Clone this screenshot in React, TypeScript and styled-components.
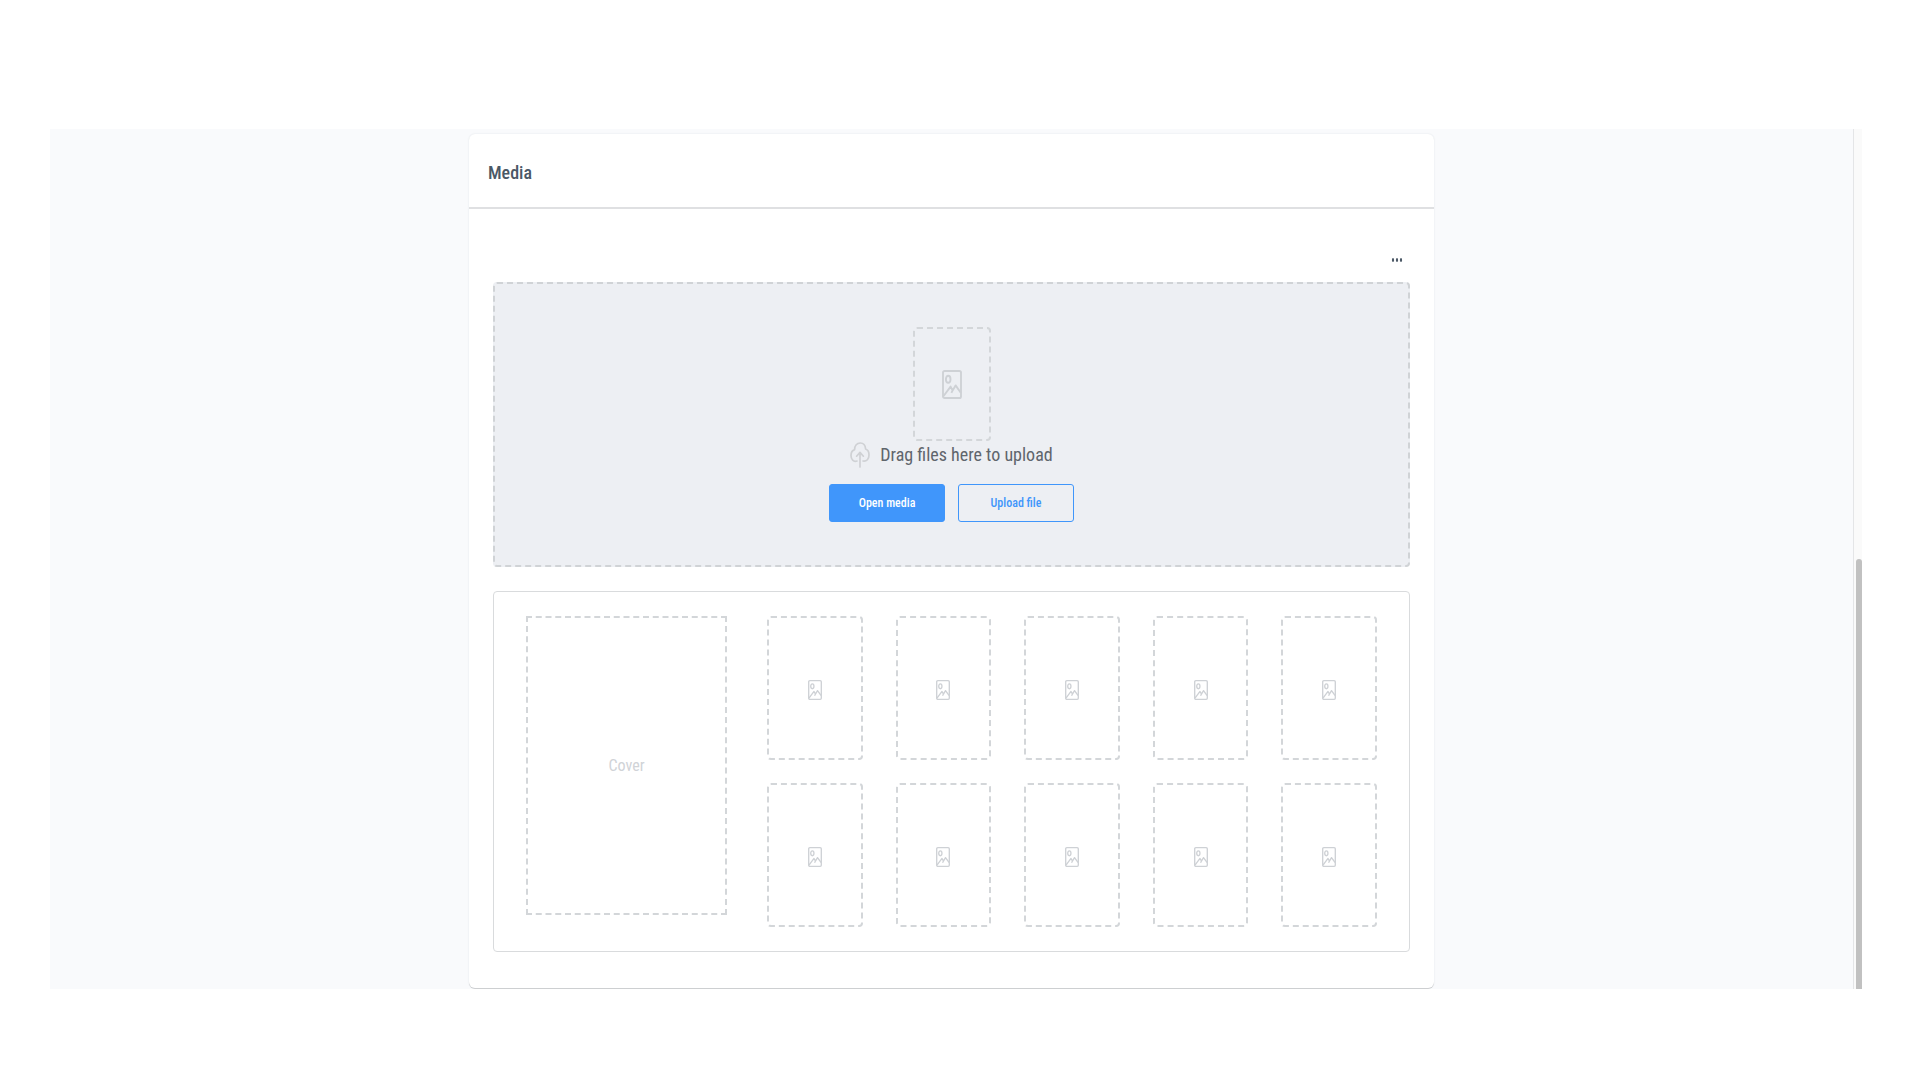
import React from "react";
import styled, { createGlobalStyle } from "styled-components";

const GlobalStyle = createGlobalStyle`
  *, *::before, *::after {
    box-sizing: border-box;
  }
  body {
    margin: 0;
    background: #ffffff;
    color: #4b5866;
    font-family: "Roboto Condensed", Roboto, "Liberation Sans", sans-serif;
  }
`;

const Page = styled.div`
  padding: 129px 58px 91px 50px;
`;

const Viewport = styled.div`
  display: flex;
  overflow: hidden;
  background: #f9fafc;
`;

const Content = styled.main`
  flex: 1;
  display: flex;
  justify-content: center;
  padding: 5px 20px 1px;
`;

const ScrollTrack = styled.div`
  display: flex;
  flex-direction: column;
  justify-content: flex-end;
  width: 9px;
  padding-left: 2px;
  border-left: 1px solid #e4e5e7;
  background: #fafafa;
`;

const ScrollThumb = styled.div`
  height: 50%;
  border-radius: 3px 3px 0 0;
  background: #c1c1c1;
`;

const Card = styled.section`
  width: 100%;
  max-width: 965px;
  border-radius: 6px;
  background: #ffffff;
  box-shadow: 0 1px 0 #cdcfd1, 0 0 2px #dfe2e6;
`;

const CardHeader = styled.header`
  display: flex;
  align-items: center;
  height: 75px;
  padding: 4px 18px 0 19px;
  border-bottom: 2px solid #dfe0e2;
`;

const Title = styled.h2`
  margin: 0;
  font-size: 18px;
  line-height: 28px;
  font-weight: 500;
`;

const CardBody = styled.div`
  display: flex;
  flex-direction: column;
  padding: 41px 24px 36px;
`;

const MenuButton = styled.button`
  align-self: flex-end;
  display: flex;
  align-items: center;
  justify-content: center;
  width: 26px;
  height: 20px;
  margin-bottom: 12px;
  padding: 0;
  border: 0;
  background: none;
  color: #4b5866;
  cursor: pointer;
`;

const DropZone = styled.div`
  display: flex;
  flex-direction: column;
  align-items: center;
  margin-bottom: 24px;
  padding: 43px 24px;
  border: 2px dashed #d0d3d6;
  border-radius: 4px;
  background: #edeff3;
`;

const Placeholder = styled.div<{ $width?: string; $height: number; $square?: boolean }>`
  display: flex;
  align-items: center;
  justify-content: center;
  width: ${(p) => p.$width ?? "auto"};
  height: ${(p) => p.$height}px;
  border: 2px dashed #d3d6d9;
  border-radius: ${(p) => (p.$square ? 0 : 4)}px;
  color: #d0d3d7;
  font-size: 16px;
  line-height: 24px;
`;

const Thumbnail = styled(Placeholder)`
  padding-top: 3px;
`;

const Hint = styled.p`
  display: flex;
  align-items: center;
  gap: 10px;
  margin: 0 0 15px;
  color: #5f656c;
  font-size: 18px;
  line-height: 28px;
`;

const Actions = styled.div`
  display: flex;
  gap: 13px;
`;

const Button = styled.button<{ $primary?: boolean }>`
  width: 116px;
  height: 38px;
  padding: 0;
  border: 1px solid #4096fb;
  border-radius: 3px;
  background: ${(p) => (p.$primary ? "#4096fb" : "transparent")};
  color: ${(p) => (p.$primary ? "#ffffff" : "#4096fb")};
  font-family: inherit;
  font-size: 12px;
  line-height: 18px;
  font-weight: 500;
  cursor: pointer;
`;

const Gallery = styled.div`
  display: flex;
  gap: 40px;
  padding: 24px 32px;
  border: 1px solid #d9dbdd;
  border-radius: 4px;
`;

const Thumbnails = styled.div`
  flex: 1;
  display: grid;
  grid-template-columns: repeat(5, 1fr);
  gap: 23px 33px;
`;

function ImageIcon({ width, height }: { width: number; height: number }) {
  return (
    <svg
      width={width}
      height={height}
      viewBox="0 0 20 29"
      preserveAspectRatio="none"
      fill="none"
      stroke="#ced1d5"
      strokeWidth="1.9"
      strokeLinejoin="round"
      aria-hidden="true"
    >
      <rect x="1" y="1" width="18" height="27" rx="1.6" />
      <ellipse cx="6.2" cy="9.2" rx="2.3" ry="3.5" />
      <path d="M1.4 26.2 L8.6 16.6 L10.6 20.4 L13.6 15.4 L18.8 22.8 M10.6 20.4 L9.4 22.8" />
    </svg>
  );
}

function CloudUploadIcon() {
  return (
    <svg width="20" height="26" viewBox="0 0 20 26" fill="none" stroke="#cfd1d4" strokeWidth="1.7" strokeLinecap="round" strokeLinejoin="round" aria-hidden="true">
      <path d="M7 19 C3.4 20.2 1 17.4 1 13.6 C1 10.4 2.6 8.2 4.6 7.6 C4.6 3.6 7 1 10.2 1 C13.2 1 15.4 3.4 15.6 7 C17.6 7.6 19 10 19 13 C19 17 16.8 19.6 13 19" />
      <path d="M10 25 V10.6 M6.6 14.2 L10 10.4 L13.4 14.2" />
    </svg>
  );
}

function MoreIcon() {
  return (
    <svg width="12" height="6" viewBox="0 0 12 6" fill="currentColor" aria-hidden="true">
      <ellipse cx="2" cy="3" rx="1.1" ry="1.9" />
      <ellipse cx="6" cy="3" rx="1.1" ry="1.9" />
      <ellipse cx="10" cy="3" rx="1.1" ry="1.9" />
    </svg>
  );
}

export default function App() {
  return (
    <Page>
      <GlobalStyle />
      <Viewport>
        <Content>
          <Card>
            <CardHeader>
              <Title>Media</Title>
            </CardHeader>
            <CardBody>
              <MenuButton type="button" aria-label="More options">
                <MoreIcon />
              </MenuButton>
              <DropZone>
                <Placeholder $width="78px" $height={114}>
                  <ImageIcon width={20} height={29} />
                </Placeholder>
                <Hint>
                  <CloudUploadIcon />
                  Drag files here to upload
                </Hint>
                <Actions>
                  <Button type="button" $primary>
                    Open media
                  </Button>
                  <Button type="button">Upload file</Button>
                </Actions>
              </DropZone>
              <Gallery>
                <Placeholder $width="201px" $height={299} $square>
                  Cover
                </Placeholder>
                <Thumbnails>
                  {Array.from({ length: 10 }, (_, i) => (
                    <Thumbnail key={i} $height={144}>
                      <ImageIcon width={14} height={20} />
                    </Thumbnail>
                  ))}
                </Thumbnails>
              </Gallery>
            </CardBody>
          </Card>
        </Content>
        <ScrollTrack>
          <ScrollThumb />
        </ScrollTrack>
      </Viewport>
    </Page>
  );
}
